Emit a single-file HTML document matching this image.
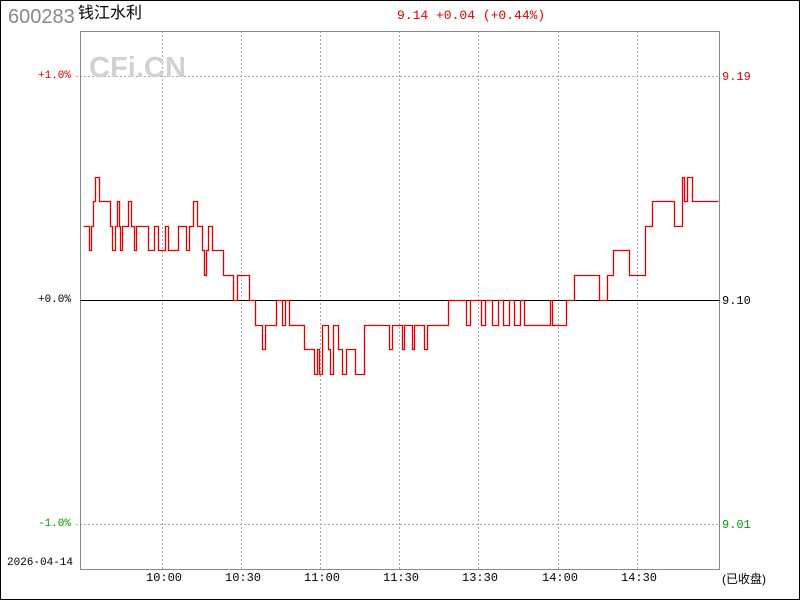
<!DOCTYPE html>
<html><head><meta charset="utf-8"><style>
html,body{margin:0;padding:0;background:#fff}
#c{position:relative;width:800px;height:600px;box-sizing:border-box;border:1px solid #000;overflow:hidden;font-family:"Liberation Mono","Noto Sans CJK SC",monospace}
.t{position:absolute;white-space:nowrap;line-height:1}
</style></head><body><div id="c">
<svg width="800" height="600" style="position:absolute;left:-1px;top:-1px" shape-rendering="crispEdges">
<g stroke="#aaa" stroke-dasharray="2,2" stroke-width="1">
<line x1="162.5" y1="31" x2="162.5" y2="569"/>
<line x1="241.5" y1="31" x2="241.5" y2="569"/>
<line x1="320.5" y1="31" x2="320.5" y2="569"/>
<line x1="399.5" y1="31" x2="399.5" y2="569"/>
<line x1="478.5" y1="31" x2="478.5" y2="569"/>
<line x1="558.5" y1="31" x2="558.5" y2="569"/>
<line x1="637.5" y1="31" x2="637.5" y2="569"/>
<line x1="76" y1="76.5" x2="720" y2="76.5"/>
<line x1="76" y1="524.5" x2="720" y2="524.5"/>
</g>
<rect x="80.5" y="31.5" width="639" height="538" fill="none" stroke="#888"/>
<line x1="80" y1="300.5" x2="720" y2="300.5" stroke="#000"/>
<text x="89" y="77" font-family="Liberation Sans,sans-serif" font-weight="bold" font-size="29" fill="#d2d2d2" textLength="97" lengthAdjust="spacingAndGlyphs">CFi.CN</text>
<path transform="translate(0.5,0.5)" fill="none" stroke="#e00000" stroke-width="1.3" shape-rendering="geometricPrecision" d="M83 226 H89 V250 H91 V226 H93 V201 H95 V177 H99 V201 H110 V226 H112 V250 H115 V226 H117 V201 H119 V226 H120 V250 H122 V226 H128 V201 H131 V226 H134 V250 H136 V226 H148 V250 H154 V226 H158 V250 H165 V226 H168 V250 H178 V226 H186 V250 H189 V226 H193 V201 H197 V226 H202 V250 H204 V275 H206 V250 H208 V226 H212 V250 H223 V275 H233 V300 H237 V275 H249 V300 H255 V325 H262 V349 H265 V325 H276 V300 H282 V325 H285 V300 H289 V325 H304 V349 H314 V374 H317 V349 H319 V374 H322 V325 H328 V349 H330 V374 H333 V325 H338 V349 H342 V374 H346 V349 H355 V374 H364 V325 H389 V349 H392 V325 H402 V349 H404 V325 H412 V349 H414 V325 H424 V349 H427 V325 H448 V300 H466 V325 H470 V300 H481 V325 H485 V300 H492 V325 H498 V300 H503 V325 H509 V300 H514 V325 H520 V300 H524 V325 H550 V300 H552 V325 H566 V300 H574 V275 H599 V300 H607 V275 H613 V250 H629 V275 H645 V226 H652 V201 H674 V226 H682 V177 H684 V201 H687 V177 H692 V201 H718"/>
</svg>
<div class="t" style="left:7px;top:6px;font-family:'Liberation Sans',sans-serif;font-size:20px;color:#888">600283</div>
<div class="t" style="left:77px;top:5px;font-family:'Liberation Sans','Noto Sans CJK SC',sans-serif;font-size:16px;color:#000">钱江水利</div>
<div class="t" style="left:396px;top:8px;font-size:13px;color:#dd0000">9.14 +0.04 (+0.44%)</div>
<div class="t" style="right:728px;top:70px;font-size:11px;color:#dd0000">+1.0%</div>
<div class="t" style="right:728px;top:294px;font-size:11px;color:#000">+0.0%</div>
<div class="t" style="right:728px;top:518px;font-size:11px;color:#009900">-1.0%</div>
<div class="t" style="left:721px;top:70px;font-size:12px;color:#dd0000">9.19</div>
<div class="t" style="left:721px;top:294px;font-size:12px;color:#000">9.10</div>
<div class="t" style="left:721px;top:518px;font-size:12px;color:#009900">9.01</div>
<div class="t" style="left:6px;top:557px;font-size:11px;color:#000">2026-04-14</div>
<div class="t" style="left:145px;top:571px;font-size:12px">10:00</div>
<div class="t" style="left:224px;top:571px;font-size:12px">10:30</div>
<div class="t" style="left:303px;top:571px;font-size:12px">11:00</div>
<div class="t" style="left:382px;top:571px;font-size:12px">11:30</div>
<div class="t" style="left:461px;top:571px;font-size:12px">13:30</div>
<div class="t" style="left:541px;top:571px;font-size:12px">14:00</div>
<div class="t" style="left:620px;top:571px;font-size:12px">14:30</div>
<div class="t" style="left:721px;top:572px;font-size:12px;font-family:'Liberation Sans','Noto Sans CJK SC',sans-serif">(已收盘)</div>
</div></body></html>
